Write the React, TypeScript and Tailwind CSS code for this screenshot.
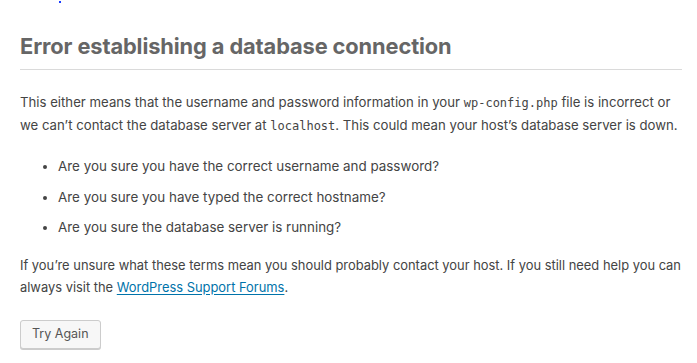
const FONT = "font-['Inter','Liberation_Sans',sans-serif]";
const MONO = "font-['DejaVu_Sans_Mono','Liberation_Mono',monospace]";

export default function App() {
  const questions = [
    "Are you sure you have the correct username and password?",
    "Are you sure you have typed the correct hostname?",
    "Are you sure the database server is running?",
  ];

  return (
    <div className={`min-h-screen bg-white ${FONT} text-[#444] relative`}>
      {/* stray focus dot at the top */}
      <span className="absolute left-[59px] top-[1px] w-[2px] h-[2px] bg-[#1a3cff]" />

      <div className="pl-5 pr-[4px] pt-[32px]">
        <h1 className="mr-[11px] text-[21.8px] leading-[28px] font-bold text-[#666] pb-[9px] border-b border-[#dadada] tracking-[-0.1px]">
          Error establishing a database connection
        </h1>

        <p className="mt-[21px] text-[13.2px] leading-[22px] whitespace-nowrap">
          This either means that the username and password information in your{" "}
          <code className={`${MONO} text-[12px]`}>wp-config.php</code> file is incorrect or
          <br />
          we can’t contact the database server at <code className={`${MONO} text-[12px]`}>localhost</code>.
          This could mean your host’s database server is down.
        </p>

        <ul className="mt-[18px] pl-[38px] list-disc text-[13.4px] leading-[22px] space-y-[8.5px]">
          {questions.map((q) => (
            <li key={q}>{q}</li>
          ))}
        </ul>

        <p className="mt-[17px] text-[12.9px] leading-[22px] whitespace-nowrap">
          If you’re unsure what these terms mean you should probably contact your host. If you still
          need help you can
          <br />
          always visit the{" "}
          <a href="#" className="text-[#0073aa] underline underline-offset-2">
            WordPress Support Forums
          </a>
          .
        </p>

        <button className="mt-[21px] h-[29px] px-[11px] text-[12.5px] text-[#555] bg-[#f7f7f7] border border-[#ccc] rounded-[3px] shadow-[0_1px_0_#ccc]">
          Try Again
        </button>
      </div>
    </div>
  );
}
